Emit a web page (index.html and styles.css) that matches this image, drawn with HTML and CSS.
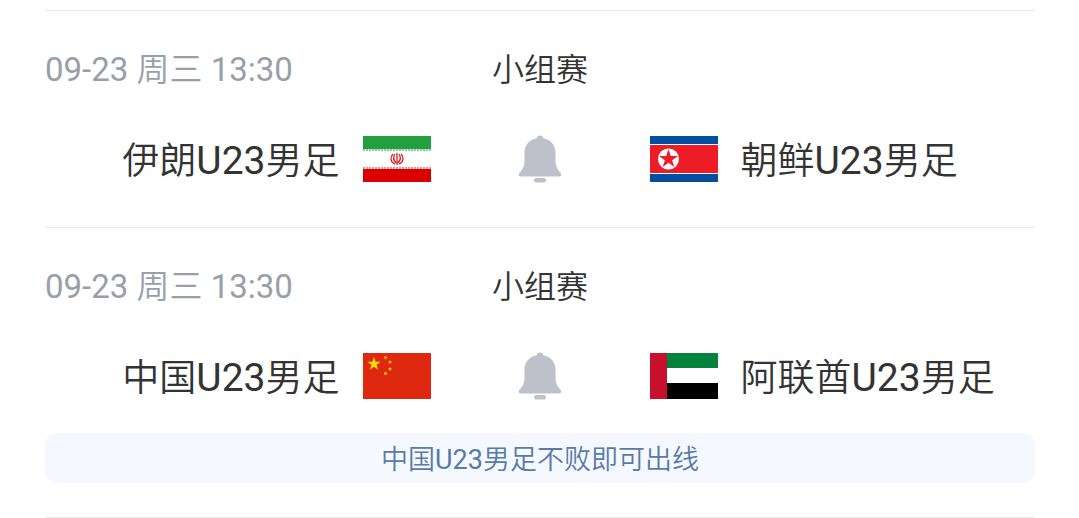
FILE: index.html
```html
<!DOCTYPE html>
<html lang="zh-CN">
<head>
	<meta charset="UTF-8">
	<meta name="viewport" content="width=device-width, initial-scale=1.0">
	<title>赛程</title>
	<link rel="stylesheet" href="styles.css">
</head>
<body>
	<svg class="defs" aria-hidden="true">
		<symbol id="bell" viewBox="0 0 44 48">
			<path d="M22 0.500c-2 0-3 1-3.300 2.700C11 4.500 6.500 10 6.500 18v8c0 5-1.500 8-4.800 11.500-1.700 2-1 4 1.300 4h38c2.300 0 3-2 1.300-4-3.300-3.500-4.800-6.500-4.800-11.500v-8c0-8-4.500-13.500-12.200-14.800C25 1.500 24 0.500 22 0.500z"/>
			<rect x="16" y="43" width="12" height="4.500" rx="2.200"/>
		</symbol>
		<symbol id="star" viewBox="-10 -10 20 20">
			<path d="M0-10 2.250-3.090H9.510L3.630 1.180 5.880 8.090 0 3.820-5.880 8.090-3.630 1.180-9.510-3.090H-2.250z"/>
		</symbol>
	</svg>

	<ul class="matches">
		<li class="match">
			<div class="match-info">
				<time class="date" datetime="09-23T13:30">09-23 周三 13:30</time>
				<span class="stage">小组赛</span>
			</div>
			<div class="teams">
				<div class="team home">
					<span class="name">伊朗<span class="age">U23</span>男足</span>
					<svg class="flag" viewBox="0 0 68 46" role="img" aria-label="伊朗">
						<path fill="#fff" d="M0 0h68v46H0z"/>
						<path fill="#239f40" d="M0 0h68v13H0z"/>
						<path fill="#da0000" d="M0 33h68v13H0z"/>
						<path stroke="#8fcda0" stroke-width="2" stroke-dasharray="2 1" d="M0 14h68"/>
						<path stroke="#ee9090" stroke-width="2" stroke-dasharray="2 1" d="M0 32h68"/>
						<g fill="none" stroke="#da2020" stroke-width="1.300">
							<path d="M34 17v12M30 18c-3 3-3 8 2 10M38 18c3 3 3 8-2 10M32 18c-2 3-2 6 1 9M36 18c2 3 2 6-1 9"/>
						</g>
					</svg>
				</div>
				<button class="remind" type="button" aria-label="提醒">
					<svg class="bell"><use href="#bell"/></svg>
				</button>
				<div class="team">
					<svg class="flag" viewBox="0 0 68 46" role="img" aria-label="朝鲜">
						<path fill="#024fa2" d="M0 0h68v46H0z"/>
						<path fill="#fff" d="M0 8h68v30H0z"/>
						<path fill="#ed1c27" d="M0 9h68v28H0z"/>
						<circle cx="18.500" cy="23" r="10.500" fill="#fff"/>
						<use href="#star" x="8.500" y="13" width="20" height="20" fill="#ed1c27"/>
					</svg>
					<span class="name">朝鲜<span class="age">U23</span>男足</span>
				</div>
			</div>
		</li>
		<li class="match">
			<div class="match-info">
				<time class="date" datetime="09-23T13:30">09-23 周三 13:30</time>
				<span class="stage">小组赛</span>
			</div>
			<div class="teams">
				<div class="team home">
					<span class="name">中国<span class="age">U23</span>男足</span>
					<svg class="flag" viewBox="0 0 68 46" role="img" aria-label="中国">
						<path fill="#de2910" d="M0 0h68v46H0z"/>
						<g fill="#ffde00">
							<use href="#star" x="4" y="4" width="14" height="14"/>
							<use href="#star" x="-2.300" y="-2.300" width="4.600" height="4.600" transform="translate(22.500 4.500) rotate(24)"/>
							<use href="#star" x="-2.300" y="-2.300" width="4.600" height="4.600" transform="translate(27 9) rotate(46)"/>
							<use href="#star" x="-2.300" y="-2.300" width="4.600" height="4.600" transform="translate(27 16)"/>
							<use href="#star" x="-2.300" y="-2.300" width="4.600" height="4.600" transform="translate(22.500 20.500) rotate(20)"/>
						</g>
					</svg>
				</div>
				<button class="remind" type="button" aria-label="提醒">
					<svg class="bell"><use href="#bell"/></svg>
				</button>
				<div class="team">
					<svg class="flag" viewBox="0 0 68 46" role="img" aria-label="阿联酋">
						<path fill="#fff" d="M0 0h68v46H0z"/>
						<path fill="#00843d" d="M0 0h68v15H0z"/>
						<path d="M0 30h68v16H0z"/>
						<path fill="#c8102e" d="M0 0h17v46H0z"/>
					</svg>
					<span class="name">阿联酋<span class="age">U23</span>男足</span>
				</div>
			</div>
			<p class="note">中国U23男足不败即可出线</p>
		</li>
	</ul>
</body>
</html>
```
FILE: styles.css
```css
* {
	box-sizing: border-box;
}
body {
	margin: 0;
	padding: 10px 44px 0 45px;
	background: #fff;
	color: #333;
	font-family: Roboto, "Noto Sans CJK SC DemiLight", "Noto Sans CJK SC", sans-serif;
}
.defs {
	display: none;
}
.matches {
	margin: 0;
	padding: 0;
	list-style: none;
	border-bottom: 1px solid #ebebeb;
}
.match {
	padding: 37px 0 34px;
	border-top: 1px solid #ebebeb;
}
.match-info,
.teams {
	display: grid;
	grid-template-columns: 1fr 219px 1fr;
	align-items: center;
}
.match-info {
	margin-bottom: 41px;
	font-size: 32px;
	line-height: 44px;
}
.date {
	color: #999fa9;
	font-size: 33px;
}
.stage {
	text-align: center;
}
.teams {
	height: 52px;
	margin-bottom: 8px;
}
.team {
	display: flex;
	align-items: center;
	gap: 23px;
}
.home {
	justify-content: flex-end;
}
.name {
	padding-top: 6px;
	font-size: 37px;
	line-height: 46px;
	white-space: nowrap;
}
.age {
	font-size: 39px;
	line-height: 1;
}
.flag {
	flex: none;
	width: 68px;
	height: 46px;
}
.remind {
	justify-self: center;
	padding: 0;
	border: 0;
	background: none;
	cursor: pointer;
}
.bell {
	display: block;
	width: 44px;
	height: 48px;
	fill: #bec1c9;
}
.note {
	margin: 31px 0 0;
	padding-top: 4px;
	border-radius: 12px;
	background: #f5f9ff;
	color: #587baa;
	font-size: 27px;
	line-height: 46px;
	text-align: center;
}
```
